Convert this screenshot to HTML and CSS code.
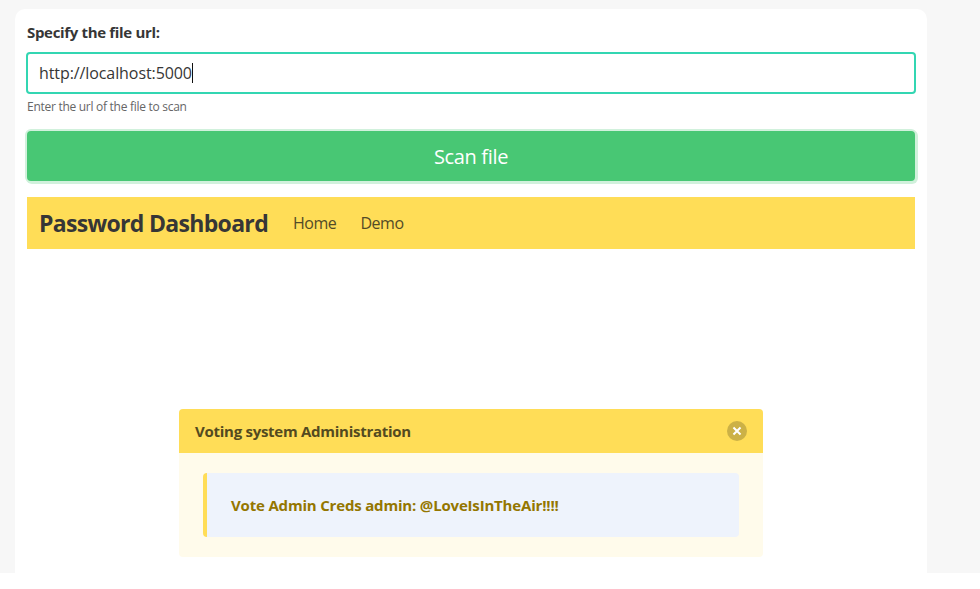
FILE: index.html
```html
<!DOCTYPE html>
<html lang="en">
<head>
<meta charset="utf-8">
<title>File scanner</title>
<link rel="stylesheet" href="styles.css">
</head>
<body>
<main class="page">
<section class="box">
<form class="form">
<label class="label">Specify the file url:</label>
<div class="input"><span class="input-text">http://localhost:5000</span><span class="caret"></span></div>
<p class="help">Enter the url of the file to scan</p>
<button class="button" type="button">Scan file</button>
</form>
<nav class="navbar">
<strong class="brand">Password Dashboard</strong>
<a class="link">Home</a>
<a class="link">Demo</a>
</nav>
<article class="message">
<header class="message-header">
<span class="title">Voting system Administration</span>
<svg class="close" viewBox="0 0 20 20"><circle cx="10" cy="10" r="10"/><path d="M5 10h10M10 5v10" transform="rotate(45 10 10)"/></svg>
</header>
<div class="message-body">
<div class="quote">Vote Admin Creds admin: @LoveIsInTheAir!!!!</div>
</div>
</article>
</section>
</main>
</body>
</html>
```
FILE: styles.css
```css
* { box-sizing: border-box; }
body { margin: 0; background: #fff; color: #363636; font: 16px/24px "Open Sans", sans-serif; }
.page { height: 573px; padding: 9px 53px 0 15px; background: #f7f7f7; }
.box { height: 564px; padding: 12px 12px 0; background: #fff; border-radius: 10px 10px 0 0; }
.label { display: block; font-weight: 700; font-size: 15px; line-height: 23px; height: 24px; letter-spacing: -0.33px; }
.input { display: flex; align-items: center; height: 42px; margin: 7px -1px 0; padding: 0 11px; border: 2px solid #33d6b2; border-radius: 4px; }
.input-text { letter-spacing: -0.09px; }
.caret { width: 1px; height: 20px; background: #111; }
.help { margin: 4px 0 0; height: 18px; font-size: 12px; line-height: 18px; color: #666; letter-spacing: -0.28px; }
.button { display: block; width: 100%; height: 50px; margin-top: 15px; padding: 0; border: 0; border-radius: 4px; background: #48c774; color: #fff; font: 20px/52px "Open Sans", sans-serif; letter-spacing: -0.35px; box-shadow: 0 0 0 2px #d1f1dc, 1px 1px 0 2px #d1f1dc; }
.navbar { display: flex; align-items: center; height: 52px; margin-top: 16px; padding-left: 12px; background: #ffdd57; }
.brand { width: 254px; font-size: 23px; font-weight: 700; letter-spacing: -0.68px; white-space: nowrap; }
.link { width: 67.5px; color: #534b27; letter-spacing: -0.5px; }
.message { width: 584px; height: 148px; margin: 160px auto 0; border-radius: 4px; overflow: hidden; background: #fffbeb; }
.message-header { display: flex; align-items: center; justify-content: space-between; height: 44px; padding: 0 16px; background: #ffdd57; color: #534a20; font-size: 15px; font-weight: 700; letter-spacing: -0.27px; }
.close { width: 20px; height: 20px; fill: #ccb146; }
.close path { stroke: #fff; stroke-width: 2; }
.message-body { padding: 20px 24px; }
.quote { height: 64px; padding: 20px 24px; border-left: 4px solid #ffdd57; border-radius: 4px; background: #eef3fc; color: #947600; font-size: 15px; font-weight: 700; letter-spacing: -0.18px; }
```
